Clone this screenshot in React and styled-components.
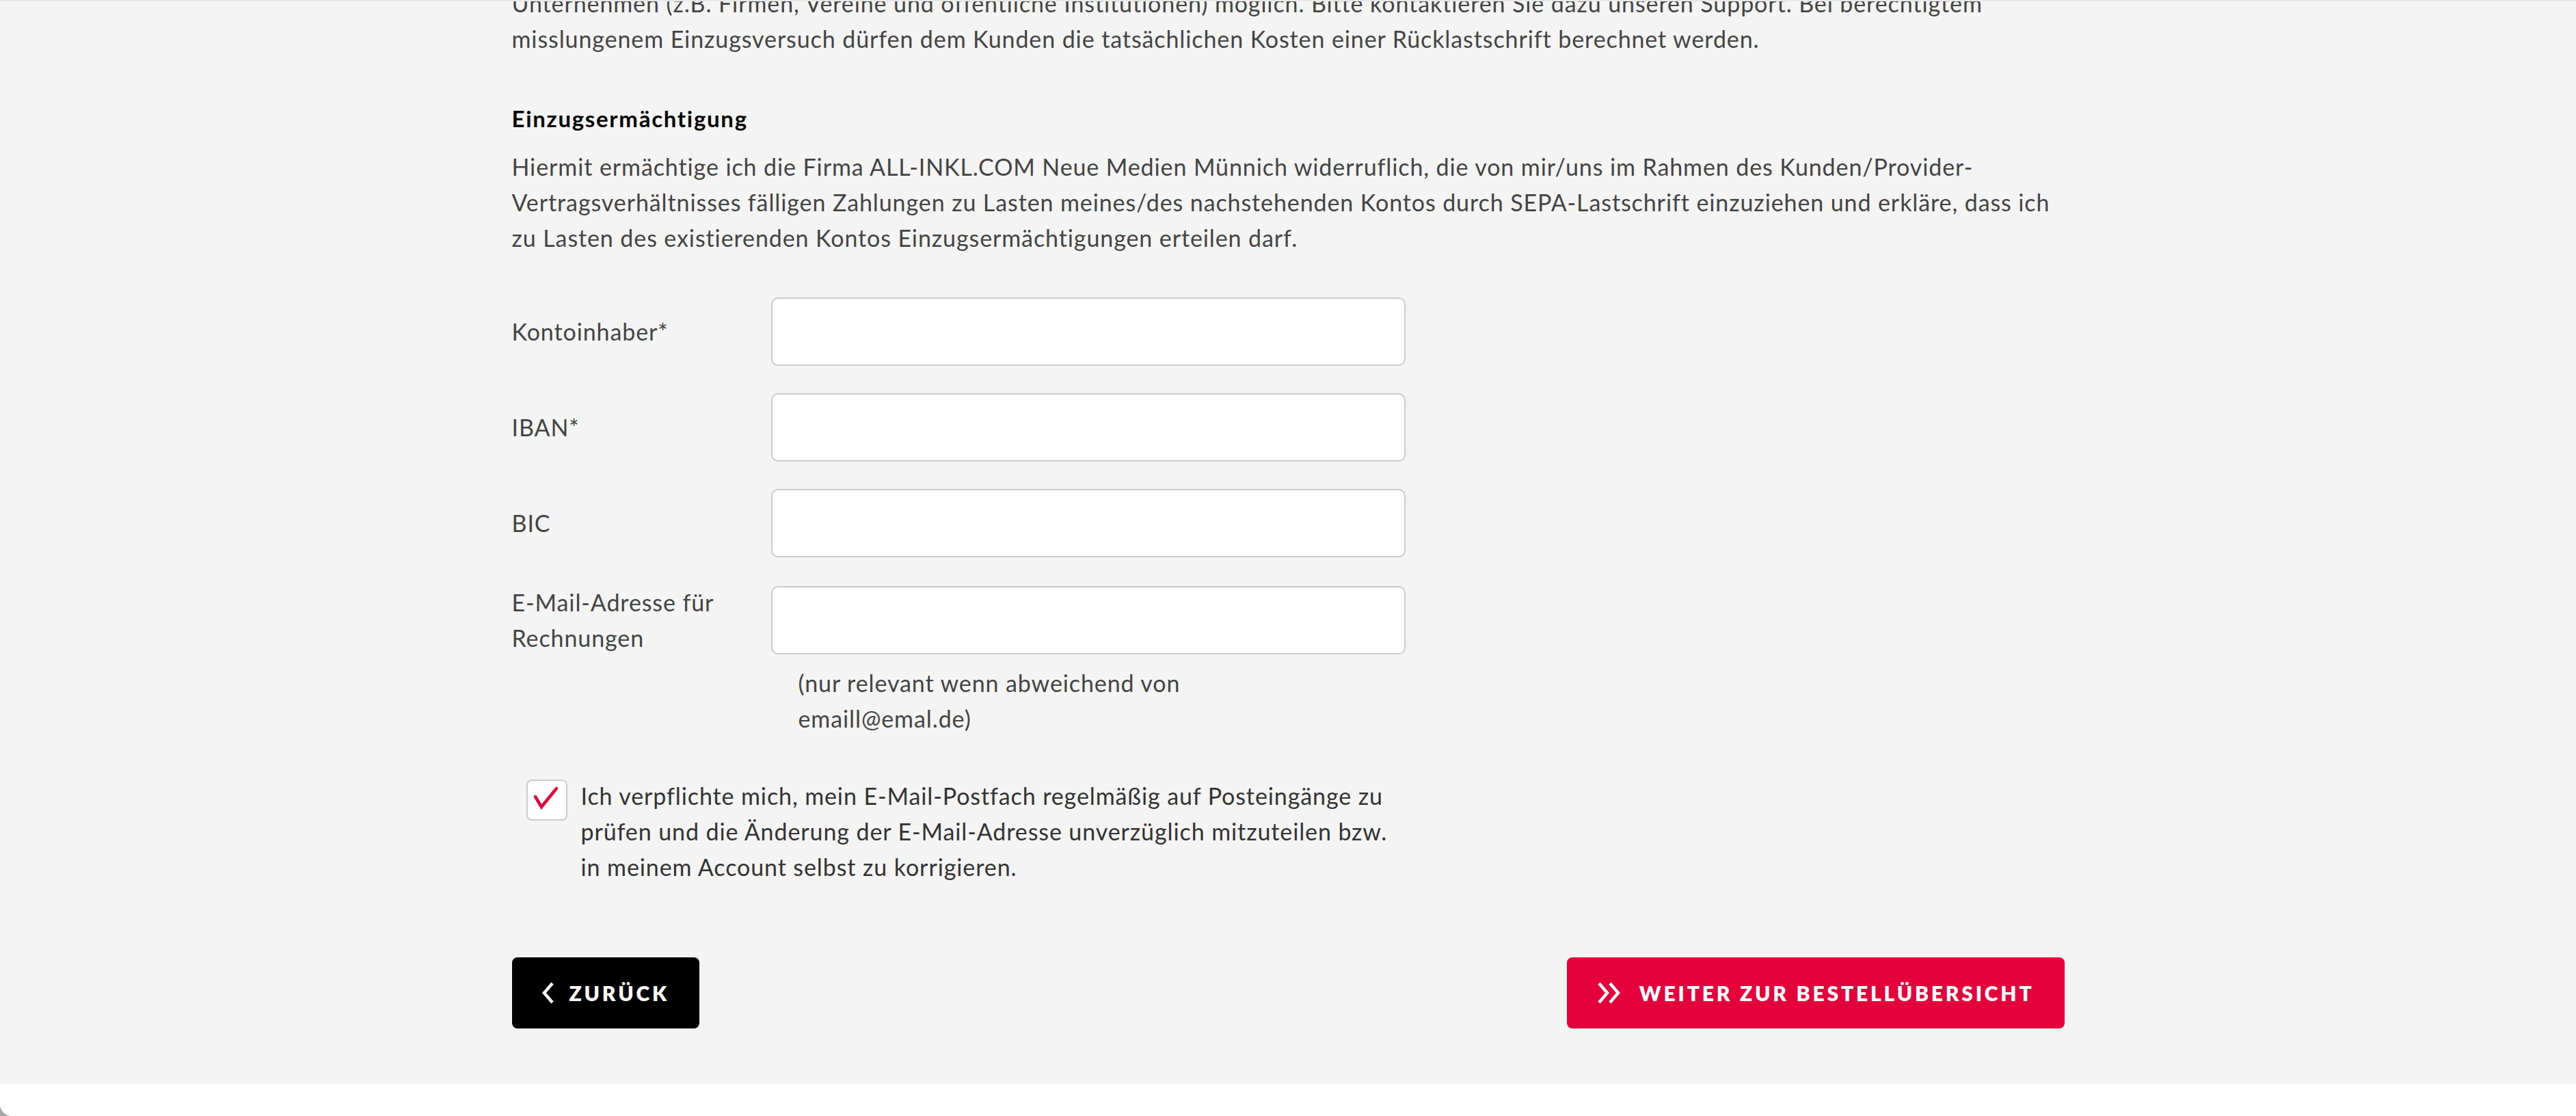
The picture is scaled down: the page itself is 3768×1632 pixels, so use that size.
import React from 'react';
import styled, { createGlobalStyle } from 'styled-components';

const GlobalStyle = createGlobalStyle`
  html, body {
    margin: 0;
    padding: 0;
  }
  body {
    background: #a9a9a9;
    font-family: Lato, "Open Sans", "Liberation Sans", sans-serif;
    -webkit-font-smoothing: antialiased;
  }
`;

const Window = styled.div`
  height: 1632px;
  display: flex;
  flex-direction: column;
  background: #fff;
  border-bottom-left-radius: 18px;
  overflow: hidden;
`;

const Page = styled.main`
  flex: 0 0 1585px;
  box-sizing: border-box;
  background: #f4f4f4;
  border-top: 2px solid #e8e8e8;
  overflow: hidden;
`;

const Container = styled.div`
  width: 2271px;
  margin: 0 auto;
`;

const Text = styled.p`
  margin: ${(p) => p.$margin || '0'};
  font-size: 34px;
  line-height: 52px;
  letter-spacing: 0.9px;
  color: #444;
`;

const Line = styled.span`
  display: block;
  white-space: nowrap;
`;

const Heading = styled.h3`
  margin: 64px 0 19px;
  font-size: 33px;
  line-height: 52px;
  letter-spacing: 1.7px;
  font-weight: 700;
  color: #000;
`;

const Form = styled.div`
  display: flex;
  flex-direction: column;
  gap: 40px;
  margin-top: 61px;
`;

const Row = styled.div`
  display: flex;
  align-items: center;
`;

const Label = styled.label`
  width: 379px;
  font-size: 34px;
  line-height: 52px;
  letter-spacing: 0.9px;
  color: #444;
`;

const Input = styled.input`
  width: 928px;
  height: 100px;
  box-sizing: border-box;
  border: 2px solid #cbcbcb;
  border-radius: 10px;
  background: #fff;
  padding: 0 24px;
  font: inherit;
  font-size: 34px;
  outline: none;
`;

const Hint = styled.p`
  margin: 14px 0 0 419px;
  width: 720px;
  font-size: 34px;
  line-height: 52px;
  letter-spacing: 0.9px;
  color: #444;
`;

const CheckRow = styled.label`
  display: flex;
  align-items: flex-start;
  gap: 20px;
  margin-top: 61px;
  padding-left: 21px;
`;

const Box = styled.span`
  flex: 0 0 60px;
  height: 60px;
  margin-top: 2px;
  box-sizing: border-box;
  border: 2px solid #cccccc;
  border-radius: 8px;
  background: #fff;
  display: flex;
  align-items: center;
  justify-content: center;
`;

const CheckText = styled.span`
  font-size: 34px;
  line-height: 52px;
  letter-spacing: 0.9px;
  color: #333;
`;

const Actions = styled.div`
  display: flex;
  justify-content: space-between;
  margin-top: 106px;
`;

const Button = styled.button`
  height: 104px;
  display: inline-flex;
  align-items: center;
  gap: ${(p) => (p.$primary ? '26px' : '22px')};
  padding: 0 44px;
  border: none;
  border-radius: 8px;
  background: ${(p) => (p.$primary ? '#e3003b' : '#000')};
  color: #fff;
  font-family: inherit;
  font-size: 30px;
  font-weight: 800;
  letter-spacing: 3.8px;
  text-transform: uppercase;
  cursor: pointer;
`;

const Footer = styled.div`
  flex: 1;
  background: #fff;
`;

const ChevronLeft = () => (
  <svg width="18" height="32" viewBox="0 0 18 32" fill="none">
    <path d="M15 2 L3 16 L15 30" stroke="#fff" strokeWidth="4.5" />
  </svg>
);

const ChevronsRight = () => (
  <svg width="36" height="32" viewBox="0 0 36 32" fill="none">
    <path d="M3 2 L15 16 L3 30" stroke="#fff" strokeWidth="4.5" />
    <path d="M19 2 L31 16 L19 30" stroke="#fff" strokeWidth="4.5" />
  </svg>
);

const Check = () => (
  <svg width="56" height="56" viewBox="0 0 56 56" fill="none">
    <path d="M11 23 L20 38 L42 11" stroke="#e3003b" strokeWidth="4.5" strokeLinecap="round" strokeLinejoin="miter" />
  </svg>
);

const intro = [
  'Unternehmen (z.B. Firmen, Vereine und öffentliche Institutionen) möglich. Bitte kontaktieren Sie dazu unseren Support. Bei berechtigtem',
  'misslungenem Einzugsversuch dürfen dem Kunden die tatsächlichen Kosten einer Rücklastschrift berechnet werden.',
];

const mandate = [
  'Hiermit ermächtige ich die Firma ALL-INKL.COM Neue Medien Münnich widerruflich, die von mir/uns im Rahmen des Kunden/Provider-',
  'Vertragsverhältnisses fälligen Zahlungen zu Lasten meines/des nachstehenden Kontos durch SEPA-Lastschrift einzuziehen und erkläre, dass ich',
  'zu Lasten des existierenden Kontos Einzugsermächtigungen erteilen darf.',
];

const fields = [
  { id: 'owner', label: 'Kontoinhaber*' },
  { id: 'iban', label: 'IBAN*' },
  { id: 'bic', label: 'BIC' },
  { id: 'mail', label: 'E-Mail-Adresse für Rechnungen' },
];

const consent = [
  'Ich verpflichte mich, mein E-Mail-Postfach regelmäßig auf Posteingänge zu',
  'prüfen und die Änderung der E-Mail-Adresse unverzüglich mitzuteilen bzw.',
  'in meinem Account selbst zu korrigieren.',
];

const App = () => {
  return (
    <>
      <GlobalStyle />
      <Window>
        <Page>
          <Container>
            <Text $margin="-23px 0 0">
              {intro.map((l) => (
                <Line key={l}>{l}</Line>
              ))}
            </Text>

            <Heading>Einzugsermächtigung</Heading>
            <Text>
              {mandate.map((l) => (
                <Line key={l}>{l}</Line>
              ))}
            </Text>

            <Form>
              {fields.map((f) => (
                <Row key={f.id}>
                  <Label htmlFor={f.id}>
                    {f.id === 'mail' ? (
                      <>
                        E-Mail-Adresse für
                        <br />
                        Rechnungen
                      </>
                    ) : (
                      f.label
                    )}
                  </Label>
                  <Input id={f.id} type="text" />
                </Row>
              ))}
            </Form>
            <Hint>(nur relevant wenn abweichend von emaill@emal.de)</Hint>

            <CheckRow>
              <Box>
                <Check />
              </Box>
              <CheckText>
                {consent.map((l) => (
                  <Line key={l}>{l}</Line>
                ))}
              </CheckText>
            </CheckRow>

            <Actions>
              <Button type="button">
                <ChevronLeft />
                Zurück
              </Button>
              <Button type="button" $primary>
                <ChevronsRight />
                Weiter zur Bestellübersicht
              </Button>
            </Actions>
          </Container>
        </Page>
        <Footer />
      </Window>
    </>
  );
};

export default App;
